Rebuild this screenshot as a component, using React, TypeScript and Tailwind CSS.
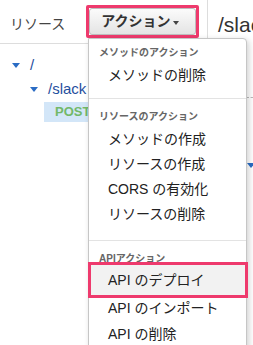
const font = "font-['Liberation_Sans','Noto_Sans_CJK_JP',sans-serif]";

const Caret = ({ className = "" }: { className?: string }) => (
  <span
    className={`inline-block h-0 w-0 border-x-[4px] border-t-[5px] border-x-transparent border-t-[#2a6cc4] ${className}`}
  />
);

const MenuHeader = ({ label }: { label: string }) => (
  <div className="h-[20px] pl-[10px] text-[10px] leading-[20px] font-bold text-[#666]">{label}</div>
);

const MenuItem = ({ label, tall }: { label: string; tall?: boolean }) => (
  <div className={`${tall ? "h-[26px] leading-[26px]" : "h-[25px] leading-[25px]"} pl-[19px] text-[14px] text-[#222]`}>
    {label}
  </div>
);

const Divider = () => <div className="h-px bg-[#e3e3e3]" />;

export default function App() {
  return (
    <div className={`relative h-[345px] w-[253px] overflow-hidden bg-white text-[#333] ${font}`}>
      <div className="flex h-full">
        {/* resource tree panel */}
        <div className="w-[208px] shrink-0 border-r border-[#ddd]">
          <div className="flex h-[44px] items-center border-b border-[#ddd] pl-[10px]">
            <span className="mt-[5px] text-[14px] text-[#444]">リソース</span>
            <div className="ml-[21px] rounded-[2px] border-[3px] border-[#ee3a6d]">
              <div className="flex h-[27px] w-[107px] items-center rounded-[3px] border border-[#bdbdbd] bg-gradient-to-b from-[#fbfbfb] to-[#e4e4e4] pl-[11px]">
                <span className="text-[14px] font-bold text-[#333]">アクション</span>
                <span className="ml-[2px] mt-[2px] inline-block h-0 w-0 border-x-[3px] border-t-[4px] border-x-transparent border-t-[#444]" />
              </div>
            </div>
          </div>

          <div className="pt-[9px]">
            <div className="flex h-[24px] items-center pl-[12px]">
              <Caret />
              <span className="ml-[10px] text-[15px] text-[#1f4f9e]">/</span>
            </div>
            <div className="flex h-[24px] items-center pl-[30px]">
              <Caret />
              <span className="ml-[10px] text-[15px] text-[#1f4f9e]">/slack</span>
            </div>
            <div className="ml-[44px] mt-[1px] flex h-[20px] w-[150px] items-center bg-[#d3e6f8] pl-[11px]">
              <span className="text-[13px] font-bold text-[#72b868]">POST</span>
            </div>
          </div>
        </div>

        {/* main panel */}
        <div className="flex-1">
          <div className="flex h-[44px] items-center pl-[10px]">
            <span className="mt-[6px] text-[21px] text-[#333]">/slack</span>
          </div>
          <div className="ml-[38px] mt-[53px] border-t border-dashed border-[#bbb]" />
          <div className="ml-[39px] mt-[53px]">
            <Caret />
          </div>
        </div>
      </div>

      {/* dropdown menu */}
      <div className="absolute left-[88px] top-[38px] h-[320px] w-[159px] rounded-tr-[4px] border border-[#c6c6c6] bg-white shadow-[2px_2px_6px_rgba(0,0,0,0.18)]">
        <div className="pt-[4px] pb-[10px]">
          <MenuHeader label="メソッドのアクション" />
          <MenuItem label="メソッドの削除" />
        </div>
        <Divider />
        <div className="pt-[8px] pb-[13px]">
          <MenuHeader label="リソースのアクション" />
          <MenuItem label="メソッドの作成" />
          <MenuItem label="リソースの作成" />
          <MenuItem label="CORS の有効化" />
          <MenuItem label="リソースの削除" />
        </div>
        <Divider />
        <div className="pt-[8px]">
          <MenuHeader label="APIアクション" />
          <div className="relative -mt-[4px] h-[30px] bg-[#f2f2f2] pl-[19px] text-[14px] leading-[30px] text-[#222]">
            API のデプロイ
            <span className="absolute -bottom-[3px] -left-[1px] -right-[2px] -top-[3px] border-[3px] border-[#ee3a6d]" />
          </div>
          <MenuItem label="API のインポート" tall />
          <MenuItem label="API の削除" tall />
        </div>
      </div>
    </div>
  );
}
